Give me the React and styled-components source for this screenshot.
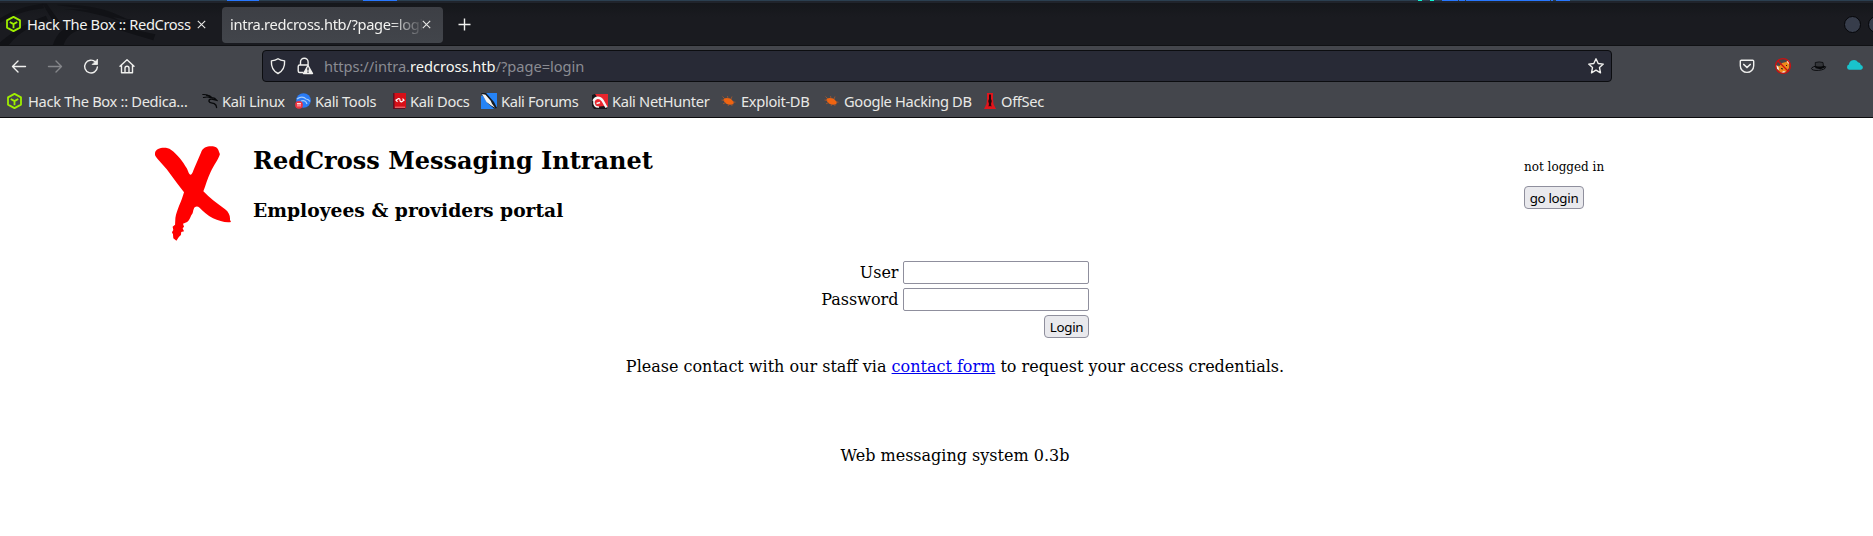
import React from "react";
import styled, { createGlobalStyle } from "styled-components";

const UI = '"Noto Sans", sans-serif';
const SERIF = '"DejaVu Serif", serif';

const Global = createGlobalStyle`
  html, body { margin: 0; padding: 0; background: #fff; }
  body { overflow: hidden; }
  * { box-sizing: border-box; }
`;

const Window = styled.div`
  width: 1873px;
  height: 536px;
  overflow: hidden;
  background: #fff;
`;

const DesktopPanel = styled.div`
  height: 1px;
  display: flex;
  background: #2b3f50;
`;
const PanelMark = styled.span`
  flex: none;
  height: 1px;
  width: ${(p) => p.$w}px;
  margin-left: ${(p) => p.$gap}px;
  background: ${(p) => p.$c || "#2777ff"};
`;

const TabBar = styled.div`
  position: relative;
  height: 45px;
  padding: 5px 0 4px;
  display: flex;
  align-items: center;
  border-top: 2px solid #20242c;
  border-bottom: 1px solid #101114;
  background: linear-gradient(#15171b, #1a1b20 14px);
  font: 14.67px/20px ${UI};
  letter-spacing: -0.38px;
  color: #f2f2f0;
  overflow: hidden;
`;
const Dragon = styled.svg`
  position: absolute;
  left: 0;
  top: -2px;
`;
const Tab = styled.div`
  position: relative;
  flex: none;
  display: flex;
  align-items: center;
  width: 222px;
  height: 36px;
  padding: 0 0 1px 6px;
`;
const ActiveTab = styled(Tab)`
  width: 221px;
  padding-left: 8px;
  border-radius: 4px;
  background: linear-gradient(#3d3f45, #42454b);
`;
const TabTitle = styled.span`
  flex: none;
  width: ${(p) => p.$w}px;
  margin-left: ${(p) => p.$gap || 0}px;
  white-space: nowrap;
  ${(p) => p.$fade && "overflow: hidden; letter-spacing: -0.32px; mask-image: linear-gradient(to right, #000 160px, transparent 194px);"}
`;
const CloseIcon = styled.svg`
  flex: none;
  margin-left: ${(p) => p.$gap}px;
`;
const NewTab = styled.svg`
  flex: none;
  margin-left: 15px;
`;
const WindowButtons = styled.div`
  display: flex;
  gap: 7px;
  margin-left: auto;
  margin-right: -12px;
`;
const WindowButton = styled.i`
  flex: none;
  width: 17px;
  height: 17px;
  border-radius: 50%;
  border: 1px solid #050609;
  background: #373d4b;
`;

const NavBar = styled.div`
  height: 40px;
  display: flex;
  align-items: center;
  background: #44464c;
`;
const NavButtons = styled.div`
  display: flex;
  width: 262px;
  padding-left: 9px;
  gap: 16px;
`;
const UrlBar = styled.div`
  display: flex;
  align-items: center;
  width: 1350px;
  height: 32px;
  padding: 0 5px;
  border: 1px solid #0c0d10;
  border-radius: 4px;
  background: #282a36;
  font: 14.67px/20px ${UI};
  color: #8b8c93;
`;
const Address = styled.span`
  margin-left: 9px;
  letter-spacing: -0.04px;
  flex: 1;
  b { font-weight: 400; color: #f8f8f2; }
`;
const LockIcon = styled.svg`
  margin-left: 7px;
`;
const Extensions = styled.div`
  display: flex;
  gap: 16px;
  margin-left: 125px;
`;

const Bookmarks = styled.div`
  display: flex;
  align-items: center;
  height: 32px;
  padding: 0 0 1px 7px;
  border-bottom: 1px solid #0c0c0e;
  background: #44464c;
  font: 14.67px/20px ${UI};
  letter-spacing: -0.32px;
  color: #e9e9e6;
`;
const Bookmark = styled.div`
  flex: none;
  display: flex;
  align-items: center;
  gap: ${(p) => p.$gap}px;
  width: ${(p) => p.$w}px;
  white-space: nowrap;
  svg { flex: none; }
`;

const Page = styled.main`
  width: 1910px;
  font: 16px/19px ${SERIF};
  color: #000;
`;
const Header = styled.header`
  display: flex;
  height: 140px;
  padding-left: 155px;
`;
const Logo = styled.svg`
  flex: none;
  margin-top: 28px;
`;
const Titles = styled.div`
  width: 1293px;
  padding-left: 22px;
`;
const Title = styled.h2`
  margin: 28px 0 0;
  font-size: 24px;
  line-height: 29px;
`;
const Subtitle = styled.h3`
  margin: 24px 0 0;
  font-size: 18.72px;
  line-height: 22px;
`;
const Session = styled.div`
  padding-top: 42px;
  font-size: 12px;
  line-height: 15px;
`;
const Button = styled.button`
  display: block;
  width: ${(p) => p.$w}px;
  height: 23px;
  margin: ${(p) => p.$top || 0}px 0 0;
  padding: 0;
  border: 1px solid #8f8f9d;
  border-radius: 4px;
  background: #e9e9ed;
  color: #000;
  font: 13.33px/20px ${UI};
  letter-spacing: -0.3px;
`;
const LoginForm = styled.form`
  display: grid;
  grid-template-columns: 82px 186px;
  grid-auto-rows: 23px;
  gap: 4px 4.5px;
  width: 272.5px;
  margin: 3px 0 0 816.5px;
  justify-items: end;
  align-items: center;
`;
const Field = styled.input`
  width: 186px;
  height: 23px;
  border: 1px solid #8f8f9d;
  border-radius: 2px;
  background: #fff;
`;
const Actions = styled.div`
  grid-column: 2;
`;
const Note = styled.p`
  margin: ${(p) => p.$top}px 0 0;
  text-align: center;
  a { color: #0000ee; }
`;

const CubeIcon = () => (
  <svg width="15" height="16" viewBox="0 0 15 16" fill="none" stroke="#9fef00" strokeWidth="1.8" strokeLinejoin="round">
    <path d="M7.500.9 14 4.400v7.200L7.500 15.100 1 11.600V4.400ZM3.800 6l3.700 2.100L11.200 6M7.500 8.100v4.200" />
  </svg>
);
const Close = ({ gap }) => (
  <CloseIcon $gap={gap} width="9" height="9" viewBox="0 0 9 9" stroke="#e8e8e6" strokeWidth="1.1">
    <path d="m.8.8 7.400 7.400M8.200.8.8 8.200" />
  </CloseIcon>
);
const Icon = ({ children, color = "#f0f0ee" }) => (
  <svg width="20" height="20" viewBox="0 0 20 20" fill="none" stroke={color} strokeWidth="1.4" strokeLinecap="round" strokeLinejoin="round">
    {children}
  </svg>
);

const DragonIcon = () => (
  <svg width="16" height="16" viewBox="0 0 17 16" fill="none" stroke="#08090b" strokeLinecap="round">
    <path d="M.8 1.200c4-.3 6.500.6 8.200 2.700M1.500 4.300c3-.9 5.500-.7 7.800.2" strokeWidth="1.100" />
    <path d="M5 2c3 .2 4.500 1 5.500 2.500l3 .7 2 2-4-1C9 5.500 7 6.500 7.500 8.500s4 1.500 5.500 2.300S15.500 13 15.500 15" strokeWidth="1.400" />
  </svg>
);
const ToolsIcon = () => (
  <svg width="16" height="16" viewBox="0 0 16 16" fill="none">
    <circle cx="8.500" cy="7.500" r="7.300" fill="#2a7bf5" />
    <path d="M2 6c3-2.500 7-2.500 9 0 2 .2 3 1 4 2.500M6 8c3-1 5-.2 6 3" stroke="#a8cdf8" strokeWidth="1.200" />
    <circle cx="4" cy="11.800" r="3.900" fill="#ef3340" />
    <path d="M2 10.500h4M3 10.500v3M5 10.500v3" stroke="#fff" strokeWidth=".8" />
  </svg>
);
const DocsIcon = () => (
  <svg width="13" height="16" viewBox="0 0 13 16" fill="none">
    <path d="M0 0h13v15H0z" fill="#d50f17" />
    <path d="M0 0h1.500v15H0zM0 15h12v1H0z" fill="#5e1022" />
    <path d="M2 14.200h10" stroke="#f2b6b6" strokeWidth=".7" />
    <path d="M4.500 8.800 3 7.200 5.500 5.600Q7 5.500 7 7.200T8.500 8.800L11 7.200 9.500 5.600" stroke="#fff" strokeWidth="1.200" />
  </svg>
);
const ForumsIcon = () => (
  <svg width="16" height="16" viewBox="0 0 16 16">
    <path d="M0 3 6 0h10v14l-4 2H0z" fill="#2684f7" />
    <path d="M0 0h5l8 9 3 6-3 .5-6-5z" fill="#161a20" />
    <path d="m1 1 3.500.8 5.200 6 1.300 3 3 4-4.200-2.500L5.500 9z" fill="#f4f4f4" />
  </svg>
);
const NetHunterIcon = () => (
  <svg width="16" height="16" viewBox="0 0 16 16" fill="none">
    <path d="M3 1h13v13H3z" fill="#e9252d" />
    <path d="M0 2l3-1 2 3-3 3 2 7 8-1 3 1v2H2L0 13z" fill="#171519" />
    <path d="M1.500 8C3.500 3.500 8 4 10.500 7.500L14.500 14.500" stroke="#f6f6f6" strokeWidth="2.400" />
    <path d="M2 8C1.500 12 3.500 14.500 7 14M4.500 10.500 8 9.500" stroke="#f6f6f6" strokeWidth="1.600" />
  </svg>
);
const BugIcon = () => (
  <svg width="15" height="14" viewBox="0 0 15 14">
    <path d="M2.500 5C4.500 3.500 8 3.800 10 5l2.800 3-.5 2.200-3.300.5C5.500 10.500 2.500 8.500 2.500 5Z" fill="#ef6411" />
    <path d="M4 5 1.500 2.500M7 4.500 6.500 2M10 5l1-2.500M3.500 6.500.5 6M5 8.500 2 9.800M8 10l-1 2M10.500 10l.5 2M12 8l2.500.2" stroke="#b85a28" strokeWidth=".7" />
  </svg>
);
const OffSecIcon = () => (
  <svg width="12" height="16" viewBox="0 0 12 16">
    <path d="M3 0h6v6l.5 5 2.500 5H0l2.500-5L3 6z" fill="#e0151c" />
    <path d="M5 1.500h2V6l.8 2-.8 3 .5 2.500L6 13l-1.500.5L5 11 4.200 8 5 6z" fill="#23080b" />
  </svg>
);

const BOOKMARKS = [
  ["Hack The Box :: Dedica…", CubeIcon, 195, 6],
  ["Kali Linux", DragonIcon, 93, 4],
  ["Kali Tools", ToolsIcon, 98, 4],
  ["Kali Docs", DocsIcon, 88, 4],
  ["Kali Forums", ForumsIcon, 111, 4],
  ["Kali NetHunter", NetHunterIcon, 129, 4],
  ["Exploit-DB", BugIcon, 103, 5],
  ["Google Hacking DB", BugIcon, 160, 5],
  ["OffSec", OffSecIcon, 70, 5],
];

export default function App() {
  return (
    <Window>
      <Global />
      <DesktopPanel>
        <PanelMark $gap={227} $w={32} />
        <PanelMark $gap={104} $w={34} />
        <PanelMark $gap={1021} $w={4} $c="#10f5d0" />
        <PanelMark $gap={8} $w={4} $c="#10f5d0" />
        <PanelMark $gap={8} $w={16} />
        <PanelMark $gap={1} $w={6} />
        <PanelMark $gap={1} $w={84} />
        <PanelMark $gap={1} $w={2} />
        <PanelMark $gap={3} $w={14} />
      </DesktopPanel>
      <TabBar>
        <Dragon width="170" height="45" viewBox="0 0 510 135" fill="#111216">
          <path d="M0 52C34 30 78 14 128 8l4 14C84 26 40 42 0 66z" />
          <path d="M0 124C46 84 88 62 138 44l6 14C96 74 58 92 24 135H0z" />
          <path d="M128 8h12l40 56-14 8z" />
          <path d="M158 135C168 96 196 72 244 62c62-12 120 4 166 26l56 12-6 18-66-20C340 80 284 72 240 86c-32 10-44 28-50 49z" />
          <path d="M170 12c70-4 130 8 176 26l44 20-52-10 30 16c-50-20-110-34-176-40l80 2z" />
          <path d="M330 72l60-18 28 14-10 22z" />
        </Dragon>
        <Tab>
          <CubeIcon />
          <TabTitle $w={165} $gap={6}>Hack The Box :: RedCross</TabTitle>
          <Close gap={5} />
        </Tab>
        <ActiveTab>
          <TabTitle $w={192} $fade>intra.redcross.htb/?page=login</TabTitle>
          <Close gap={0} />
        </ActiveTab>
        <NewTab width="13" height="13" viewBox="0 0 13 13" stroke="#f2f2f0" strokeWidth="1.4">
          <path d="M6.500.5v12M.5 6.500h12" />
        </NewTab>
        <WindowButtons>
          <WindowButton />
          <WindowButton />
        </WindowButtons>
      </TabBar>
      <NavBar>
        <NavButtons>
          <Icon><path d="M16.500 10.500H3.500M9 5l-5.500 5.500L9 16" /></Icon>
          <Icon color="#85868a"><path d="M3.500 10.500h13M11 5l5.500 5.500L11 16" /></Icon>
          <Icon>
            <path d="M14.500 6A6.400 6.400 0 1 0 16.400 11" />
            <path d="M16.500 3.500v5h-5z" fill="#f0f0ee" strokeWidth=".8" />
          </Icon>
          <Icon><path d="M3 10.300 10 3.700l7 6.600M4.500 9.200v7.500h11V9.200M8 16.500v-4.300a2 2 0 0 1 4 0v4.300" /></Icon>
        </NavButtons>
        <UrlBar>
          <Icon><path d="M10 2.700c2.300 1.700 4.500 2 6.600 2.200.3 5-1.200 10-6.600 12.600C4.600 14.900 3.100 9.900 3.400 4.900 5.500 4.700 7.700 4.400 10 2.700Z" /></Icon>
          <LockIcon width="20" height="20" viewBox="0 0 20 20" fill="none" stroke="#f0f0ee" strokeWidth="1.400">
            <path d="M5.500 9V6a3.800 3.800 0 0 1 7.600 0v3M8.500 16.500H4.700a1.500 1.500 0 0 1-1.500-1.500V10.500A1.500 1.500 0 0 1 4.700 9h9" />
            <path d="m13 9.500 4.500 8h-9z" fill="#f0f0ee" strokeLinejoin="round" />
            <path d="M13 11.500v3M13 15.500v1.200" stroke="#282a36" />
          </LockIcon>
          <Address>https://intra.<b>redcross.htb</b>/?page=login</Address>
          <Icon><path d="m10 2.800 2.200 4.700 5.100.6-3.800 3.500 1 5.200-4.500-2.600-4.500 2.600 1-5.200-3.800-3.500 5.100-.6z" /></Icon>
        </UrlBar>
        <Extensions>
          <Icon>
            <path d="M3.300 5.300q0-1 1-1h11.400q1 0 1 1v4.400a6.700 6.700 0 0 1-13.400 0Z" />
            <path d="m6.800 8.500 3.200 3 3.200-3" strokeWidth="1.700" />
          </Icon>
          <svg width="20" height="20" viewBox="0 0 20 20" fill="none">
            <path d="M3.500 9.500l3 .5 2.500-3 4-1 2-2 1.500 4-.5 4-3 4-5 1-3-3z" fill="#ee8a1c" />
            <path d="m3 9 2.500 2 .5 3-2-1zM14 4l2 .5.5 3.500-2-1zM8 16.500l3-1.500 2 1.500-2 .5z" fill="#f5f0e8" />
            <path d="m8 12.500 2 .5M13 10l1-1" stroke="#241a12" />
            <circle cx="10" cy="10" r="7.400" stroke="#cc1111" strokeWidth="1.300" />
            <path d="m4.800 4.800 10.400 10.400" stroke="#cc1111" strokeWidth="1.300" />
          </svg>
          <svg width="20" height="20" viewBox="0 0 20 20">
            <ellipse cx="9.500" cy="12" rx="7" ry="2.300" fill="none" stroke="#08090b" strokeWidth=".9" transform="rotate(-5 10 12)" />
            <path d="M6.300 11V6.500q4-1.200 7.700 0L14.500 11q-4 1.500-8.200 0" fill="#34363a" stroke="#08090b" strokeWidth=".8" />
            <path d="M6.300 10q4 1.200 8 0l3.200.8-6 2.500-5-1z" fill="#08090b" />
          </svg>
          <svg width="20" height="20" viewBox="0 0 20 20">
            <path d="M4.500 13.700a2.600 2.600 0 0 1-.6-5.100A5 5 0 0 1 13 6.300a3 3 0 0 1 2.800 2.700 2.400 2.400 0 0 1 .3 4.700Z" fill="#19c3cc" />
          </svg>
        </Extensions>
      </NavBar>
      <Bookmarks>
        {BOOKMARKS.map(([label, Glyph, w, gap]) => (
          <Bookmark key={label} $w={w} $gap={gap}>
            <Glyph />
            {label}
          </Bookmark>
        ))}
      </Bookmarks>
      <Page>
        <Header>
          <Logo width="76" height="95" viewBox="73 77 220 285" preserveAspectRatio="none" fill="#ff0000">
            <path d="M73 98C75 82 105 78 119 88C138 102 154 124 165 144C170 154 171 163 176 163C181 163 183 152 187 143L206 97C212 78 231 76 246 79C257 82 258 95 261 101C258 115 243 135 234 155C224 177 220 194 213 213C231 233 252 248 276 267C287 276 291 287 290 298L293 305C279 309 258 301 241 294C225 285 212 273 202 262C196 256 188 258 186 264C182 273 184 279 178 285C175 292 173 300 166 305L154 310L157 319L153 324L157 333L149 335L148 344L142 350L135 361L126 354L125 342L122 336L126 329L124 319L131 313L132 293C136 268 150 243 157 216L138 190L107 147L80 115C74 108 72 104 73 98Z" />
          </Logo>
          <Titles>
            <Title>RedCross Messaging Intranet</Title>
            <Subtitle>Employees &amp; providers portal</Subtitle>
          </Titles>
          <Session>
            not logged in
            <Button $w={60} $top={11}>go login</Button>
          </Session>
        </Header>
        <LoginForm>
          <label htmlFor="user">User</label>
          <Field id="user" />
          <label htmlFor="pass">Password</label>
          <Field id="pass" type="password" />
          <Actions><Button type="button" $w={45}>Login</Button></Actions>
        </LoginForm>
        <Note $top={19}>
          Please contact with our staff via <a href="#contact">contact form</a> to request your access credentials.
        </Note>
        <Note $top={70}>Web messaging system 0.3b</Note>
      </Page>
    </Window>
  );
}
